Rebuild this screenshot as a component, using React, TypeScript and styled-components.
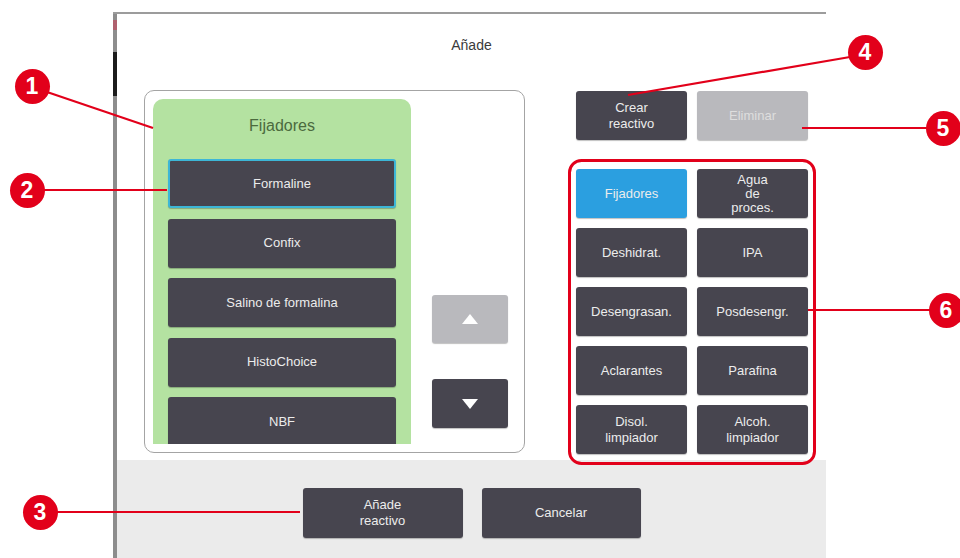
import React from "react";
import styled, { createGlobalStyle } from "styled-components";

const Global = createGlobalStyle`
  html, body { margin: 0; padding: 0; background: #fff; }
  body { font-family: "Liberation Sans", Arial, sans-serif; }
  * { box-sizing: border-box; }
`;

const Page = styled.div`
  position: relative;
  width: 960px;
  height: 558px;
  overflow: hidden;
  padding: 12px 0 0 113px;
  background: #fff;
`;

const Frame = styled.div`
  width: 713px;
  height: 546px;
  border-top: 2px solid #9c9c9c;
  display: flex;
`;

const Edge = styled.div`
  width: 4px;
  flex: none;
  background: linear-gradient(
    to bottom,
    #8d8d8d 0 6px,
    #b0606e 6px 16px,
    #8d8d8d 16px 38px,
    #1c1c1c 38px 82px,
    #8d8d8d 82px
  );
`;

const Screen = styled.div`
  flex: 1;
  display: flex;
  flex-direction: column;
  background: #fff;
`;

const Header = styled.div`
  height: 76px;
  padding-top: 22px;
  display: flex;
  justify-content: center;
`;

const Title = styled.div`
  font-size: 14px;
  line-height: 18px;
  color: #3a3a3a;
`;

const Body = styled.div`
  height: 370px;
  display: flex;
  padding-left: 27px;
`;

const ListBox = styled.div`
  width: 381px;
  height: 363px;
  border: 1px solid #a4a4a4;
  border-radius: 10px;
  padding: 8px;
  display: flex;
`;

const GreenPanel = styled.div`
  width: 258px;
  height: 100%;
  background: #b4e2a1;
  border-radius: 10px 10px 0 0;
  overflow: hidden;
  padding: 0 15px;
  display: flex;
  flex-direction: column;
`;

const GroupHeading = styled.div`
  height: 60px;
  padding-top: 18px;
  flex: none;
  text-align: center;
  font-size: 16px;
  line-height: 18px;
  color: #4b6a3e;
`;

const ItemList = styled.div`
  display: flex;
  flex-direction: column;
  gap: 10.5px;
`;

const Btn = styled.div<{ $w?: number; $h?: number; $tone?: "dark" | "light" | "blue"; $selected?: boolean }>`
  flex: none;
  width: ${(p) => (p.$w ? `${p.$w}px` : "100%")};
  height: ${(p) => p.$h ?? 49}px;
  border-radius: 3px;
  display: flex;
  align-items: center;
  justify-content: center;
  text-align: center;
  overflow: hidden;
  font-size: 13px;
  line-height: 16px;
  background: ${(p) => (p.$tone === "light" ? "#b9b9bd" : p.$tone === "blue" ? "#2b9fe0" : "#47454f")};
  color: ${(p) => (p.$tone === "light" ? "#dedede" : "#ececec")};
  border: 2px solid ${(p) => (p.$selected ? "#3db6d6" : "transparent")};
  box-shadow: 0 1px 1px rgba(0, 0, 0, 0.25);
`;

const ArrowCol = styled.div`
  margin-left: 21px;
  padding-top: 196px;
  display: flex;
  flex-direction: column;
  gap: 36px;
`;

const RightCol = styled.div`
  margin-left: 51px;
  padding-top: 1px;
  display: flex;
  flex-direction: column;
`;

const TopRow = styled.div`
  display: flex;
  gap: 10px;
`;

const CatGrid = styled.div`
  margin-top: 29px;
  display: grid;
  grid-template-columns: 111px 111px;
  grid-auto-rows: 49px;
  column-gap: 10px;
  row-gap: 10px;
`;

const TightText = styled.span`
  line-height: 14px;
`;

const Footer = styled.div`
  height: 98px;
  background: #ebebeb;
  padding-top: 28px;
  display: flex;
  justify-content: center;
  gap: 19px;
`;

const Overlay = styled.svg`
  position: absolute;
  left: 0;
  top: 0;
  width: 960px;
  height: 558px;
  pointer-events: none;
`;

const Badge = styled.div<{ $x: number; $y: number }>`
  position: absolute;
  left: ${(p) => p.$x - 17.5}px;
  top: ${(p) => p.$y - 17.5}px;
  width: 35px;
  height: 35px;
  border-radius: 50%;
  background: #e2001a;
  color: #fff;
  display: flex;
  align-items: center;
  justify-content: center;
  font-family: "Liberation Sans Narrow", "Liberation Sans", Arial, sans-serif;
  font-weight: bold;
  font-size: 23px;
  line-height: 1;
`;

const Tri = ({ up }: { up?: boolean }) => (
  <svg width="16" height="10" viewBox="0 0 16 10">
    <polygon points={up ? "8,0 16,10 0,10" : "0,0 16,0 8,10"} fill="#fff" />
  </svg>
);

const items = ["Formaline", "Confix", "Salino de formalina", "HistoChoice", "NBF"];

const cats: { label: React.ReactNode; tone?: "blue" }[] = [
  { label: "Fijadores", tone: "blue" },
  { label: <TightText>Agua<br />de<br />proces.</TightText> },
  { label: "Deshidrat." },
  { label: "IPA" },
  { label: "Desengrasan." },
  { label: "Posdesengr." },
  { label: "Aclarantes" },
  { label: "Parafina" },
  { label: <>Disol.<br />limpiador</> },
  { label: <>Alcoh.<br />limpiador</> },
];

const lines = [
  [47, 92, 153, 128],
  [44, 190, 167, 190],
  [57, 512, 300, 512],
  [628, 95, 850, 57],
  [802, 128, 928, 128],
  [808, 310, 930, 310],
];

const badges = [
  { n: 1, x: 32, y: 86 },
  { n: 2, x: 27, y: 190 },
  { n: 3, x: 40, y: 512 },
  { n: 4, x: 865, y: 52 },
  { n: 5, x: 943, y: 128 },
  { n: 6, x: 946, y: 310 },
];

export default function App() {
  return (
    <>
      <Global />
      <Page>
        <Frame>
          <Edge />
          <Screen>
            <Header>
              <Title>Añade</Title>
            </Header>
            <Body>
              <ListBox>
                <GreenPanel>
                  <GroupHeading>Fijadores</GroupHeading>
                  <ItemList>
                    {items.map((it, i) => (
                      <Btn key={it} $selected={i === 0}>
                        {it}
                      </Btn>
                    ))}
                  </ItemList>
                </GreenPanel>
                <ArrowCol>
                  <Btn $w={76} $h={48} $tone="light">
                    <Tri up />
                  </Btn>
                  <Btn $w={76} $h={49}>
                    <Tri />
                  </Btn>
                </ArrowCol>
              </ListBox>
              <RightCol>
                <TopRow>
                  <Btn $w={111}>
                    Crear
                    <br />
                    reactivo
                  </Btn>
                  <Btn $w={111} $tone="light">
                    Eliminar
                  </Btn>
                </TopRow>
                <CatGrid>
                  {cats.map((c, i) => (
                    <Btn key={i} $w={111} $tone={c.tone}>
                      {c.label}
                    </Btn>
                  ))}
                </CatGrid>
              </RightCol>
            </Body>
            <Footer>
              <Btn $w={160} $h={50}>
                Añade
                <br />
                reactivo
              </Btn>
              <Btn $w={159} $h={50}>
                Cancelar
              </Btn>
            </Footer>
          </Screen>
        </Frame>
        <Overlay viewBox="0 0 960 558">
          {lines.map(([x1, y1, x2, y2], i) => (
            <line key={i} x1={x1} y1={y1} x2={x2} y2={y2} stroke="#e2001a" strokeWidth={2.2} />
          ))}
          <rect x={569.5} y={160.5} width={245} height={303} rx={12} fill="none" stroke="#e2001a" strokeWidth={3} />
        </Overlay>
        {badges.map((b) => (
          <Badge key={b.n} $x={b.x} $y={b.y}>
            {b.n}
          </Badge>
        ))}
      </Page>
    </>
  );
}
